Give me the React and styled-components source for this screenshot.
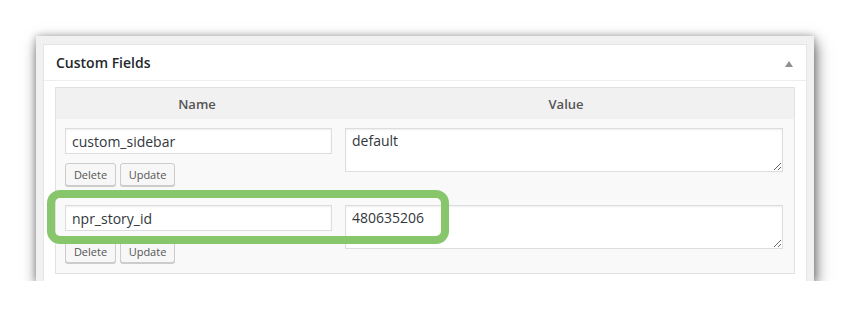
import React from "react";
import styled, { createGlobalStyle } from "styled-components";

const Global = createGlobalStyle`
  html, body { margin: 0; padding: 0; background: #ffffff; }
  body { font-family: "Open Sans", "Liberation Sans", sans-serif; }
`;

const Page = styled.div`
  padding: 36px 0 0 36px;
`;

const Window = styled.div`
  position: relative;
  width: 778px;
  height: 245px;
  box-sizing: border-box;
  background: #f1f1f1;
  padding: 8px 7px 0 7px;
  box-shadow: 2px 6px 14px rgba(0, 0, 0, 0.55), 0 0 7px rgba(0, 0, 0, 0.25);
  display: flex;
`;

const Postbox = styled.div`
  flex: 1;
  background: #fff;
  border: 1px solid #e5e5e5;
  border-bottom: none;
  display: flex;
  flex-direction: column;
`;

const Header = styled.div`
  height: 36px;
  box-sizing: border-box;
  border-bottom: 1px solid #eee;
  padding: 0 13px 0 12px;
  display: flex;
  align-items: center;
  justify-content: space-between;
`;

const Title = styled.h2`
  margin: 0;
  font-size: 14px;
  font-weight: 600;
  color: #23282d;
  line-height: 1;
`;

const Toggle = styled.span`
  width: 0;
  height: 0;
  border-left: 4px solid transparent;
  border-right: 4px solid transparent;
  border-bottom: 6px solid #8c8f94;
  margin-top: 2px;
`;

const Inside = styled.div`
  padding: 6px 11px 0 11px;
`;

const Table = styled.div`
  border: 1px solid #e1e1e1;
  background: #f9f9f9;
`;

const Head = styled.div`
  display: grid;
  grid-template-columns: 282px 1fr;
  height: 31px;
  background: #f1f1f1;
  align-items: center;
`;

const Th = styled.div`
  text-align: center;
  font-size: 13px;
  font-weight: 600;
  color: #555;
`;

const Row = styled.div`
  display: grid;
  grid-template-columns: 267px 1fr;
  column-gap: 13px;
  padding: 9px 11px 9px 9px;
  align-items: start;
`;

const KeyCell = styled.div`
  display: flex;
  flex-direction: column;
  gap: 9px;
`;

const TextInput = styled.input`
  box-sizing: border-box;
  width: 100%;
  height: 26px;
  margin: 0;
  border: 1px solid #ddd;
  box-shadow: inset 0 1px 2px rgba(0, 0, 0, 0.07);
  background: #fff;
  padding: 0 6px;
  font-family: "Open Sans", "Liberation Sans", sans-serif;
  font-size: 14px;
  color: #32373c;
  outline: none;
`;

const TextArea = styled.textarea`
  box-sizing: border-box;
  width: 100%;
  height: 44px;
  margin: 0;
  display: block;
  border: 1px solid #ddd;
  box-shadow: inset 0 1px 2px rgba(0, 0, 0, 0.07);
  background: #fff;
  padding: 2px 6px;
  font-family: "Open Sans", "Liberation Sans", sans-serif;
  font-size: 14px;
  line-height: 20px;
  color: #32373c;
  outline: none;
`;

const Buttons = styled.div`
  display: flex;
  gap: 4px;
`;

const Button = styled.button`
  box-sizing: border-box;
  height: 23px;
  width: ${(p) => p.$w}px;
  margin: 0 0 1px 0;
  padding: 0;
  border: 1px solid #ccc;
  border-radius: 3px;
  background: #f7f7f7;
  box-shadow: 0 1px 0 #ccc;
  font-family: "Open Sans", "Liberation Sans", sans-serif;
  font-size: 11px;
  color: #555;
  cursor: pointer;
`;

const Highlight = styled.div`
  position: absolute;
  left: 11px;
  top: 154px;
  width: 402px;
  height: 54px;
  box-sizing: border-box;
  border: 8px solid #87c66b;
  border-radius: 13px;
  pointer-events: none;
`;

const fields = [
  { key: "custom_sidebar", value: "default" },
  { key: "npr_story_id", value: "480635206" },
];

export default function App() {
  return (
    <>
      <Global />
      <Page>
        <Window>
          <Postbox>
            <Header>
              <Title>Custom Fields</Title>
              <Toggle />
            </Header>
            <Inside>
              <Table>
                <Head>
                  <Th>Name</Th>
                  <Th>Value</Th>
                </Head>
                {fields.map((f) => (
                  <Row key={f.key}>
                    <KeyCell>
                      <TextInput defaultValue={f.key} />
                      <Buttons>
                        <Button $w={51}>Delete</Button>
                        <Button $w={55}>Update</Button>
                      </Buttons>
                    </KeyCell>
                    <TextArea defaultValue={f.value} />
                  </Row>
                ))}
              </Table>
            </Inside>
          </Postbox>
          <Highlight />
        </Window>
      </Page>
    </>
  );
}
